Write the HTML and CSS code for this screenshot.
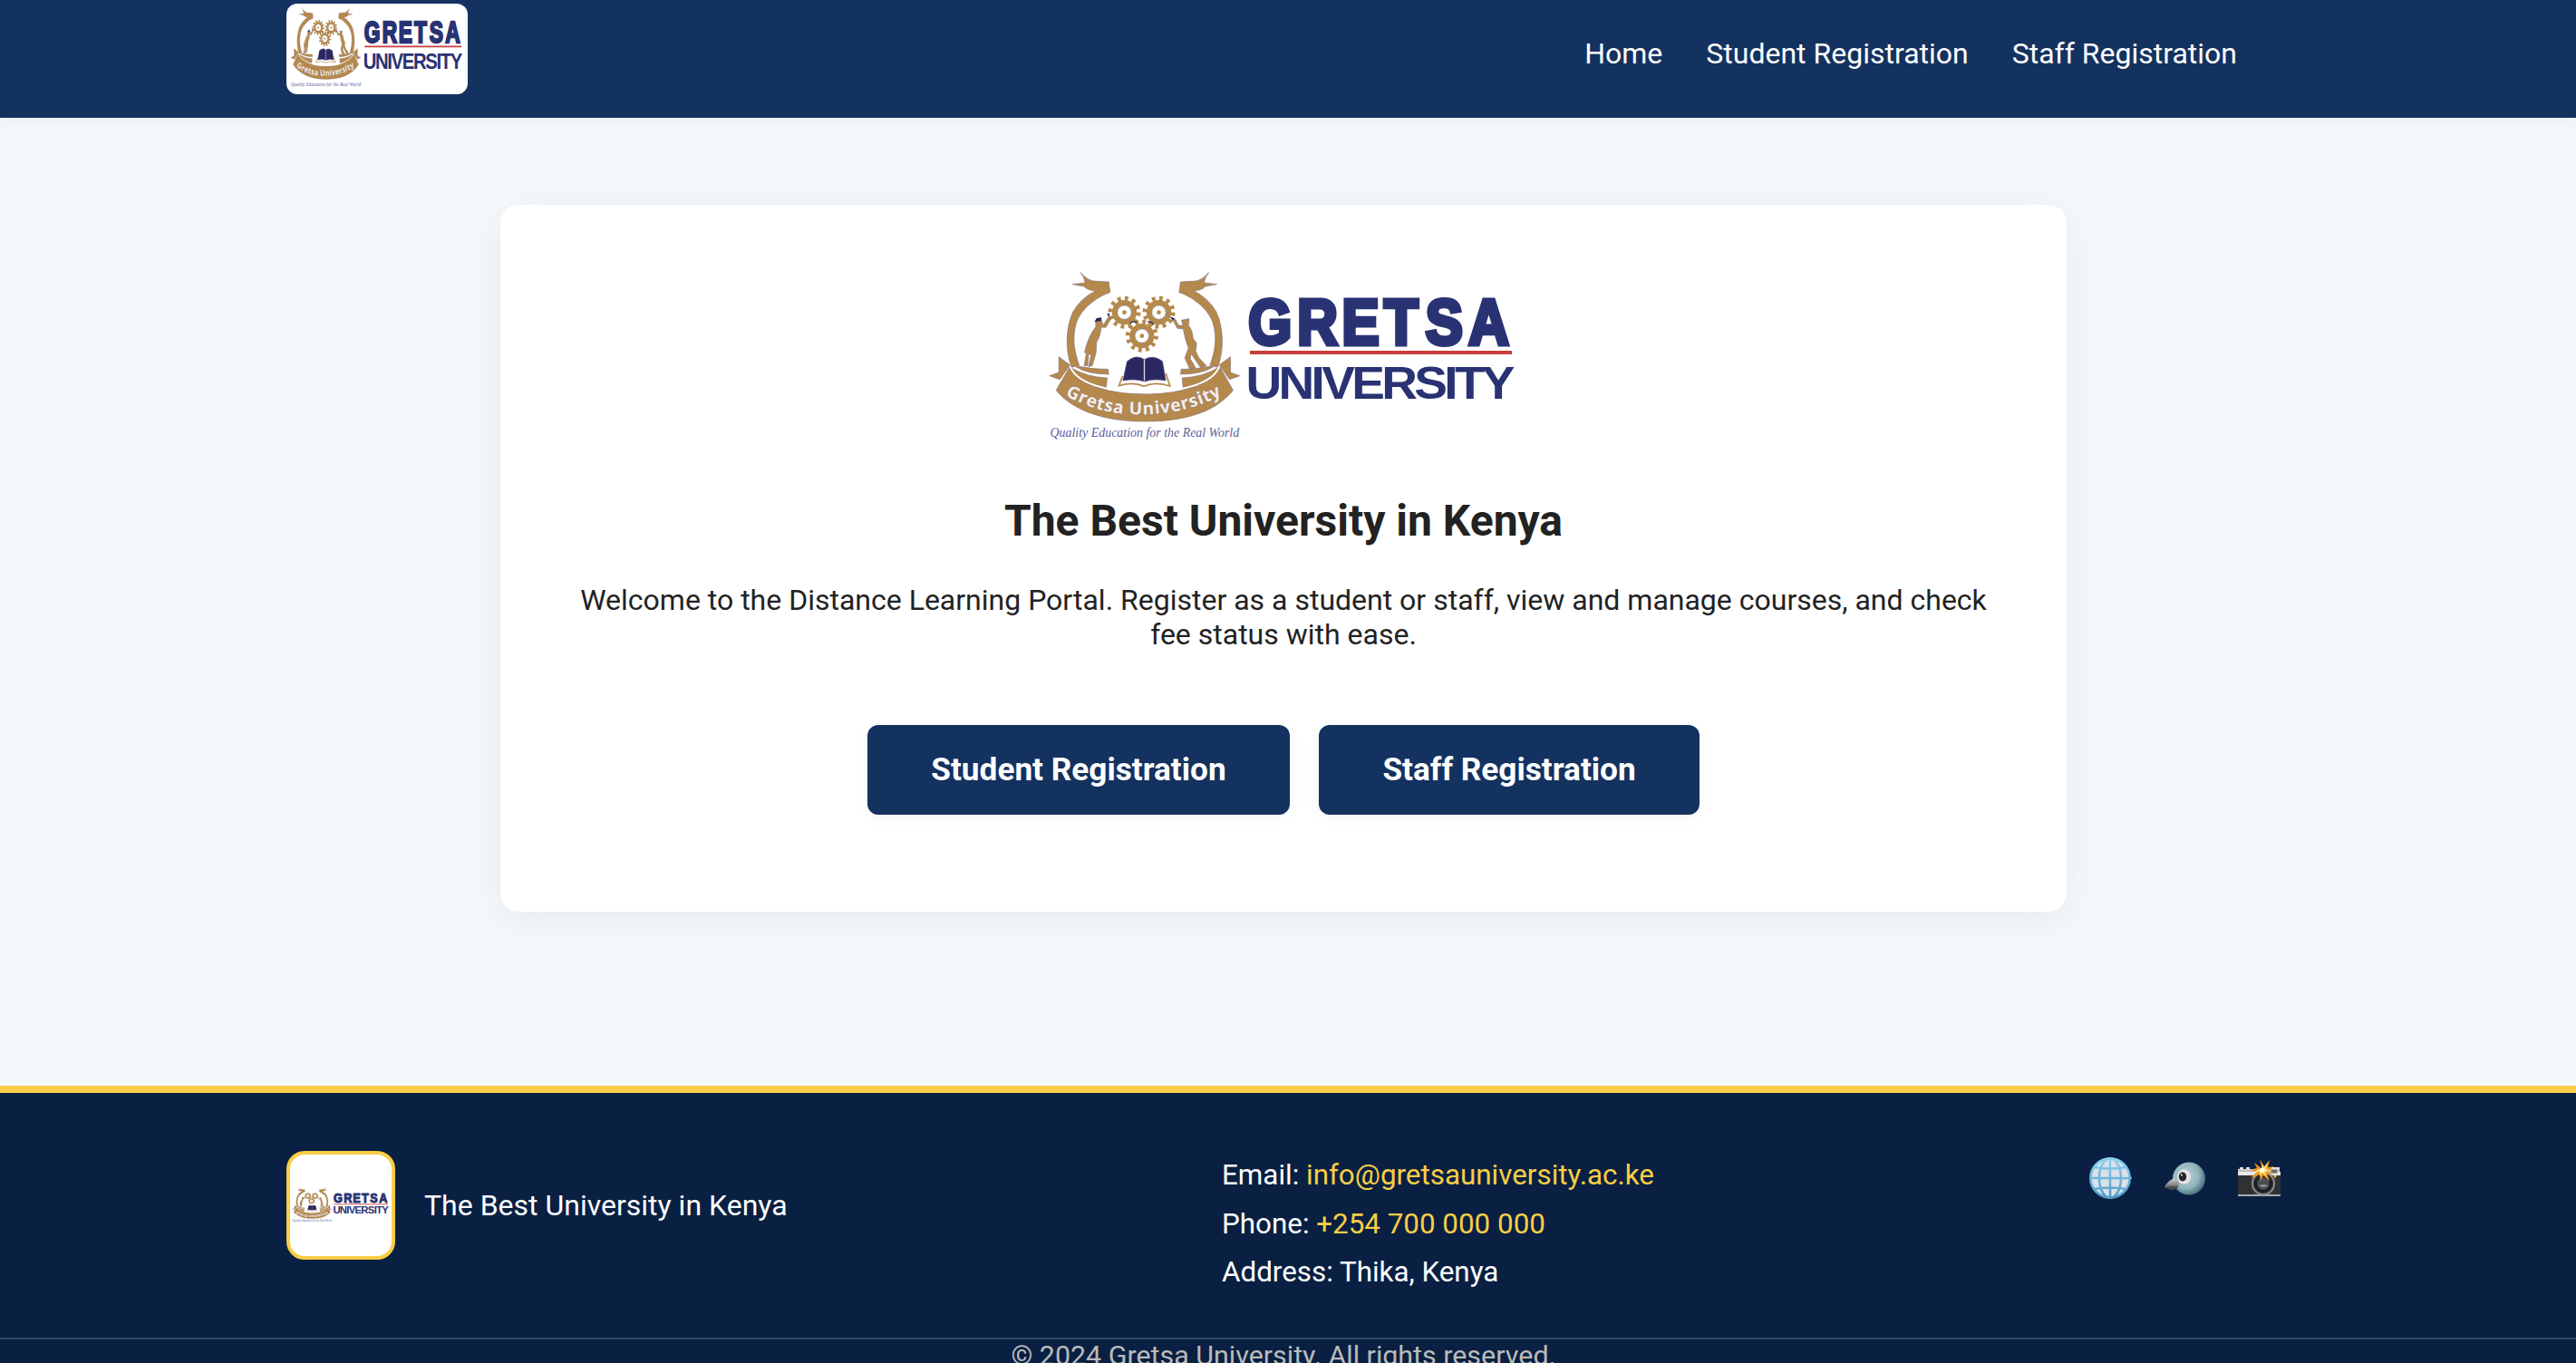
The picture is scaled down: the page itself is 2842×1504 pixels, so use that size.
FILE: index.html
```html
<!DOCTYPE html>
<html lang="en">
<head>
<meta charset="utf-8">
<title>Gretsa University</title>
<link rel="stylesheet" href="styles.css">
</head>
<body>
<svg class="defs" aria-hidden="true">
  <defs>
    <g id="gear">
      <circle r="45" fill="none" stroke="#b5894c" stroke-width="18" stroke-dasharray="11 12.56"/>
      <circle r="32" fill="none" stroke="#b5894c" stroke-width="18"/>
      <circle r="23" fill="#fff" stroke="#8d7c86" stroke-width="2"/>
      <circle r="7" fill="#b5894c"/>
    </g>
    <g id="ribbon-half" fill="#b5894c" stroke="#86727b" stroke-width="2">
      <path d="M155 62 Q178 90 205 91 L248 93 L253 128 C215 140 162 175 142 225 C125 280 135 325 151 370 L125 376 C104 320 105 245 130 192 Q155 148 205 122 Q178 122 166 108 L128 101 L170 96 Q168 80 155 62Z"/>
      <path d="M83 341 L120 368 L86 416 L52 404 L83 393Z"/>
      <path d="M151 373 Q205 383 246 382 L248 399 Q180 399 140 375Z"/>
      <path d="M125 378 Q175 408 243 411 L239 449 Q160 438 120 388Z"/>
    </g>
    <symbol id="logo" viewBox="0 0 542 211" preserveAspectRatio="none">
      <g transform="translate(-4.5 -9) scale(.33333)">
        <use href="#ribbon-half"/>
        <use href="#ribbon-half" transform="translate(734 0) scale(-1 1)"/>
        <path d="M118 376 C145 440 265 464 367 464 C470 464 590 440 617 376 L660 452 C600 525 500 555 367 555 C235 555 130 520 74 452Z" fill="#b5894c" stroke="#86727b" stroke-width="2"/>
        <path d="M122 376 C145 434 265 460 367 460 C470 460 590 434 613 376" fill="none" stroke="#fff" stroke-width="6"/>
        <use href="#gear" x="300" y="194"/>
        <use href="#gear" x="414" y="194"/>
        <use href="#gear" x="358" y="272"/>
        <g fill="#b5894c" stroke="#86727b" stroke-width="2">
          <path d="M205 224 L224 220 L230 236 L248 208 L258 210 L239 244 L223 243 Q221 274 208 292 L206 328 L194 370 L181 374 L190 334 L182 332 L178 371 L167 371 L174 329 L168 327 Q179 275 205 242Z"/>
          <path d="M489 220 L514 215 L512 238 Q526 252 527 280 L539 296 L536 322 L547 345 L572 371 L552 377 L521 331 L518 347 L536 378 L516 381 L500 345 L512 312 Q499 278 495 249 L475 247 L457 213 L468 216 L479 237 L494 238Z"/>
        </g>
        <path d="M201 226 L208 213 L224 211 L224 222Z M242 198 L252 198 L249 210Z M451 208 L466 214 L460 222Z" fill="#2a2761"/>
        <path d="M319 230 Q328 221 341 227 M377 225 Q390 223 397 235" fill="none" stroke="#2a2761" stroke-width="4"/>
        <path d="M294 405 L282 437 Q330 422 364 439 Q405 422 451 438 L437 395" fill="none" stroke="#b5894c" stroke-width="5"/>
        <path d="M309 356 Q339 331 366 350 Q396 333 426 356 L437 420 Q399 412 367 423 Q335 412 295 420Z" fill="#2a2761" stroke="#514d7d" stroke-width="2"/>
        <path d="M366 350 V421" stroke="#d8d4e2" stroke-width="4"/>
        <path id="ribbon-arc" d="M104 468 Q225 538 367 532 Q520 529 647 455" fill="none"/>
        <text class="logo-ribbon"><textPath href="#ribbon-arc" textLength="540">Gretsa University</textPath></text>
        <text class="logo-motto" x="54" y="606" textLength="626" lengthAdjust="spacingAndGlyphs">Quality Education for the Real World</text>
      </g>
      <text class="logo-name" transform="scale(.88 1)" x="264 325.400 381.300 434 486 540" y="91.500">GRETSA</text>
      <path d="M234 100H523" stroke="#c83e3c" stroke-width="4"/>
      <text class="logo-kind" transform="translate(229.500 151) scale(1.1 1)" textLength="270">UNIVERSITY</text>
    </symbol>
    <linearGradient id="globe-line" x2="0" y2="1"><stop stop-color="#8cd2ef"/><stop offset="1" stop-color="#4e9cc8"/></linearGradient>
    <radialGradient id="feather" cx=".4" cy=".4" r=".62"><stop stop-color="#b9d4d8"/><stop offset=".65" stop-color="#8fb5bb"/><stop offset="1" stop-color="#48727b"/></radialGradient>
    <linearGradient id="beak" x2="0" y2="1"><stop stop-color="#d0d0d2"/><stop offset="1" stop-color="#55565a"/></linearGradient>
    <linearGradient id="metal" x2="0" y2="1"><stop stop-color="#ededed"/><stop offset="1" stop-color="#a7a8aa"/></linearGradient>
  </defs>
</svg>

<div class="page">
  <header class="header">
    <div class="header-inner">
      <svg class="header-logo" role="img" aria-label="Gretsa University"><use href="#logo" width="200" height="100"/></svg>
      <nav class="nav"><a>Home</a><a>Student Registration</a><a>Staff Registration</a></nav>
    </div>
  </header>

  <main class="main">
    <section class="card">
      <svg class="hero-logo" role="img" aria-label="Gretsa University"><use href="#logo" width="542" height="211"/></svg>
      <h1>The Best University in Kenya</h1>
      <p>Welcome to the Distance Learning Portal. Register as a student or staff, view and manage courses, and check fee status with ease.</p>
      <div class="actions"><a class="button">Student Registration</a><a class="button">Staff Registration</a></div>
    </section>
  </main>

  <footer class="footer">
    <div class="footer-inner">
      <div class="brand">
        <div class="brand-box"><svg class="brand-logo" role="img" aria-label="Gretsa University"><use href="#logo" width="112" height="44"/></svg></div>
        <span>The Best University in Kenya</span>
      </div>
      <div class="contact">
        <div>Email: <a>info@gretsauniversity.ac.ke</a></div>
        <div>Phone: <a>+254 700 000 000</a></div>
        <div>Address: Thika, Kenya</div>
      </div>
      <div class="social">
        <svg viewBox="0 0 48 48">
          <circle cx="24" cy="24" r="22" fill="#dce0ea"/>
          <g fill="none" stroke="url(#globe-line)" stroke-width="2.6">
            <circle cx="24" cy="24" r="21.6"/><ellipse cx="24" cy="24" rx="12" ry="21.6"/>
            <path d="M23.9 2L24.1 46M7 12Q24 15 41 12M2 24H46.1L46 24.1M7 36Q24 33 41 36"/>
          </g>
        </svg>
        <svg viewBox="0 0 48 48">
          <circle cx="29" cy="24.500" r="18" fill="url(#feather)"/>
          <path d="M13 24Q5 27 2 34Q10 38 17 35L18 29Z" fill="url(#beak)"/>
          <path d="M2 34Q10 32 17 33L15 36Q8 38 2 34Z" fill="#4a4b50"/>
          <ellipse cx="23.500" cy="22.500" rx="7.500" ry="8" fill="#e8e5e3"/>
          <ellipse cx="22" cy="22.500" rx="4.200" ry="5" fill="#25262a"/><circle cx="21" cy="20.500" r="1" fill="#fff"/>
        </svg>
        <svg viewBox="0 0 48 48">
          <path d="M1 18V14H3V12H7V14H10V12H14V14H36V12H47V18Z" fill="url(#metal)"/>
          <path d="M1 17H48V44H1Z" fill="url(#metal)"/>
          <path d="M1 21H48V42H1Z" fill="#303133"/>
          <path d="M37 14H45V19H37Z" fill="#76705f" stroke="#ddd"/>
          <circle cx="29" cy="30" r="12" fill="#2a2b2d" stroke="#8c8e91" stroke-width="2"/>
          <circle cx="29" cy="30" r="8" fill="#4b4e53" stroke="#17181a" stroke-width="2"/>
          <path d="M24 32Q29 30 34 32Q29 36 24 32Z" fill="#8d9095"/>
          <circle cx="42" cy="22" r="1.500" fill="#f5c636"/>
          <path d="M28 14L25 3L30 11L36 4L34 12L41 11L35 16L39 20L33 19L36 27L29 21L26 27L25 20L15 24L22 17L14 15L22 13L19 7Z" fill="#f59a20"/>
          <path d="M28 15L27 8L30 12L34 8L32 14L37 16L31 17L32 22L28 18L25 22L25 17L20 17L24 14Z" fill="#ffe47a"/><circle cx="28" cy="15" r="2.500" fill="#fff"/>
        </svg>
      </div>
    </div>
    <div class="copyright">© 2024 Gretsa University. All rights reserved.</div>
  </footer>
</div>
</body>
</html>
```
FILE: styles.css
```css
* { box-sizing: border-box; }
html, body { height: 100%; }
body {
  margin: 0;
  overflow: hidden;
  background: #f4f8fb;
  color: #222;
  font: 32px/38px Roboto, sans-serif;
}
.defs { position: absolute; width: 0; height: 0; }
.page { height: 1504px; overflow: hidden; display: flex; flex-direction: column; }
.header {
  flex: none;
  height: 130px;
  background: #14325f;
  box-shadow: 0 4px 16px rgba(0, 0, 0, .04);
}
.header-inner {
  width: 2200px;
  height: 100%;
  margin-left: 316px;
  padding: 4px 48px 0 0;
  display: flex;
  justify-content: space-between;
  align-items: flex-start;
}
.header-logo { width: 200px; height: 100px; border-radius: 12px; background: #fff; }
.nav { display: flex; gap: 48px; padding-top: 36px; color: #fff; }
.main { flex: none; height: 1068px; padding: 96px 0 0 552px; }
.card {
  width: 1728px;
  height: 780px;
  padding: 63px 80px 0;
  border-radius: 20px;
  background: #fff;
  box-shadow: 0 8px 40px rgba(0, 0, 0, .06);
  display: flex;
  flex-direction: column;
  align-items: center;
  text-align: center;
}
.hero-logo { flex: none; width: 542px; height: 211px; }
.card h1 { margin: 47px 0 0; font-size: 48px; line-height: 56px; font-weight: 700; }
.card p { margin: 40px 0 0; }
.actions { display: flex; gap: 32px; margin-top: 81px; }
.button {
  padding: 30px 70.400px;
  border-radius: 12px;
  background: #14325f;
  color: #fff;
  font-size: 35.200px;
  font-weight: 700;
  line-height: 39px;
  box-shadow: 0 4px 16px rgba(0, 0, 0, .04);
}
.footer { flex: none; border-top: 8px solid #f9ce46; background: #092042; color: #fff; }
.footer-inner { width: 2200px; height: 270px; margin-left: 316px; padding-top: 64px; display: flex; align-items: flex-start; }
.brand { width: 1032px; display: flex; align-items: center; gap: 32px; }
.brand-box {
  width: 120px;
  height: 120px;
  border: 4px solid #f9ce46;
  border-radius: 20px;
  background: #fff;
  display: flex;
  align-items: center;
}
.brand-logo { width: 112px; height: 44px; }
.contact { flex: 1; display: grid; row-gap: 15.500px; padding-top: 8px; font-size: 31.360px; }
.contact a { color: #f9ce46; }
.social { display: flex; gap: 34px; padding-top: 6px; }
.social svg { width: 48px; height: 48px; }
.copyright {
  height: 60px;
  padding-right: 10px;
  border-top: 2px solid #304560;
  color: #bbb;
  text-align: center;
  font-size: 30.400px;
  line-height: 35px;
}
.logo-ribbon { font: 700 58px "Open Sans", sans-serif; fill: #f4efec; stroke: #86727b; stroke-width: 2px; paint-order: stroke; }
.logo-motto { font: italic 42px "Liberation Serif", serif; fill: #5a619c; }
.logo-name { font: 700 70px "Liberation Sans", sans-serif; fill: #293273; stroke: #293273; stroke-width: 5px; }
.logo-kind { font: 700 50px "Liberation Sans", sans-serif; fill: #293273; }
```
